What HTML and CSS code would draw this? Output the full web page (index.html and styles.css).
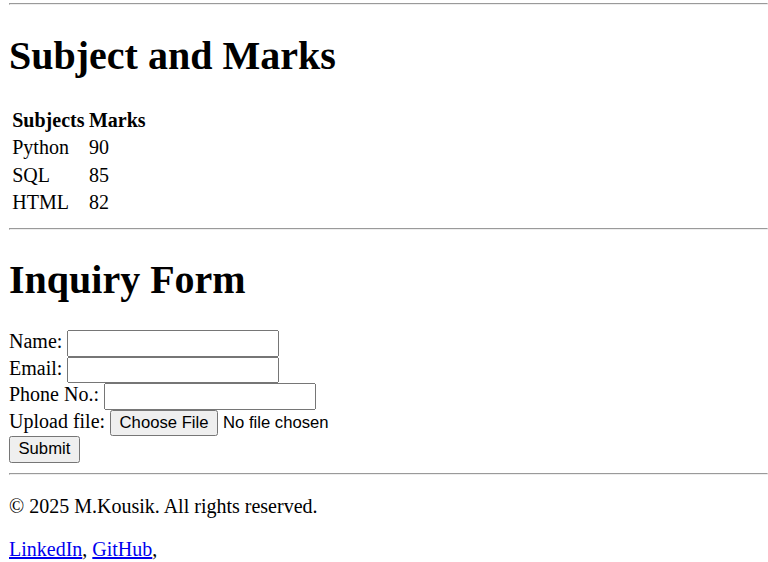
FILE: index.html
```html
<!DOCTYPE html>
<html>
<head>
<meta charset="utf-8">
<title>Portfolio</title>
<link rel="stylesheet" href="styles.css">
</head>
<body>
<hr class="top-rule">
<section class="marks">
<h1>Subject and Marks</h1>
<table>
<tr><th>Subjects</th><th>Marks</th></tr>
<tr><td>Python</td><td>90</td></tr>
<tr><td>SQL</td><td>85</td></tr>
<tr><td>HTML</td><td>82</td></tr>
</table>
</section>
<hr>
<section class="inquiry">
<h1>Inquiry Form</h1>
<form>
Name: <input type="text" class="field"><br>
Email: <input type="email" class="field"><br>
Phone No.: <input type="tel" class="field"><br>
Upload file: <input type="file"><br>
<input type="submit" value="Submit">
</form>
</section>
<hr>
<footer>
<p>© 2025 M.Kousik. All rights reserved.</p>
<p><a href="#">LinkedIn</a>, <a href="#">GitHub</a>,</p>
</footer>
</body>
</html>
```
FILE: styles.css
```css
html {
  zoom: 1.25;
}
body {
  font-family: "Liberation Serif", "Times New Roman", serif;
  font-size: 16px;
  margin: 0 0 8px 7.2px;
}
.top-rule {
  margin-top: 2.4px;
}
input, button {
  font-family: "Liberation Sans", Arial, sans-serif;
  font-size: 13.333px;
}
.field {
  box-sizing: border-box;
  width: 169.6px;
}
th {
  text-align: left;
}
a {
  color: #0000ee;
}
```
